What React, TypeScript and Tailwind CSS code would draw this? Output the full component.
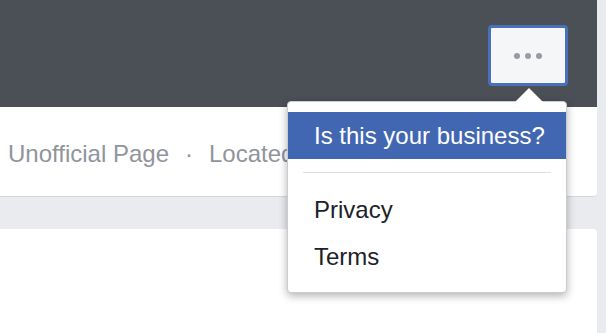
import React from 'react';

const font = { fontFamily: '"Liberation Sans", Arial, sans-serif' };

const MenuItem = ({ label, active }: { label: string; active?: boolean }) => (
  <div
    className={`h-[47px] flex items-center pl-[26px] text-[24px] leading-none ${
      active ? 'bg-[#4267b2] text-white' : 'text-[#1d2129]'
    }`}
  >
    {label}
  </div>
);

const MoreMenu = () => (
  <div className="relative">
    <button className="w-[80px] h-[61px] rounded-[4px] border-[3px] border-[#4a6fbd] bg-[#f5f6f7] flex items-center justify-center gap-[5px]">
      <span className="w-[6px] h-[6px] rounded-full bg-[#979ba3]" />
      <span className="w-[6px] h-[6px] rounded-full bg-[#979ba3]" />
      <span className="w-[6px] h-[6px] rounded-full bg-[#979ba3]" />
    </button>

    {/* caret */}
    <div className="absolute top-[63px] left-[27px] w-0 h-0 border-l-[14px] border-r-[14px] border-b-[14px] border-l-transparent border-r-transparent border-b-white z-20" />

    {/* dropdown */}
    <div className="absolute top-[76px] right-[1px] w-[280px] bg-white rounded-[4px] border border-[#c9ccd1] shadow-[0_3px_8px_rgba(0,0,0,0.3)] pt-[10px] pb-[12px] z-10">
      <MenuItem label="Is this your business?" active />
      <div className="mx-[15px] my-[13px] h-px bg-[#dddfe2]" />
      <MenuItem label="Privacy" />
      <MenuItem label="Terms" />
    </div>
  </div>
);

export default function App() {
  return (
    <div className="w-[606px] h-[333px] bg-[#e9ebee] overflow-hidden flex flex-col pr-[9px]" style={font}>
      <div className="bg-white rounded-br-[4px] border-b border-[#d3d6db]">
        <div className="h-[107px] bg-[#4b4f56] flex justify-end items-start pt-[25px] pr-[29px]">
          <MoreMenu />
        </div>
        <div className="h-[89px] flex items-center pl-[8px] pt-[4px] text-[24px] text-[#90949c] whitespace-nowrap">
          <span>Unofficial Page</span>
          <span className="px-[16px]">·</span>
          <span>Located in</span>
        </div>
      </div>
      <div className="mt-[32px] flex-1 bg-white rounded-tr-[4px]" />
    </div>
  );
}
